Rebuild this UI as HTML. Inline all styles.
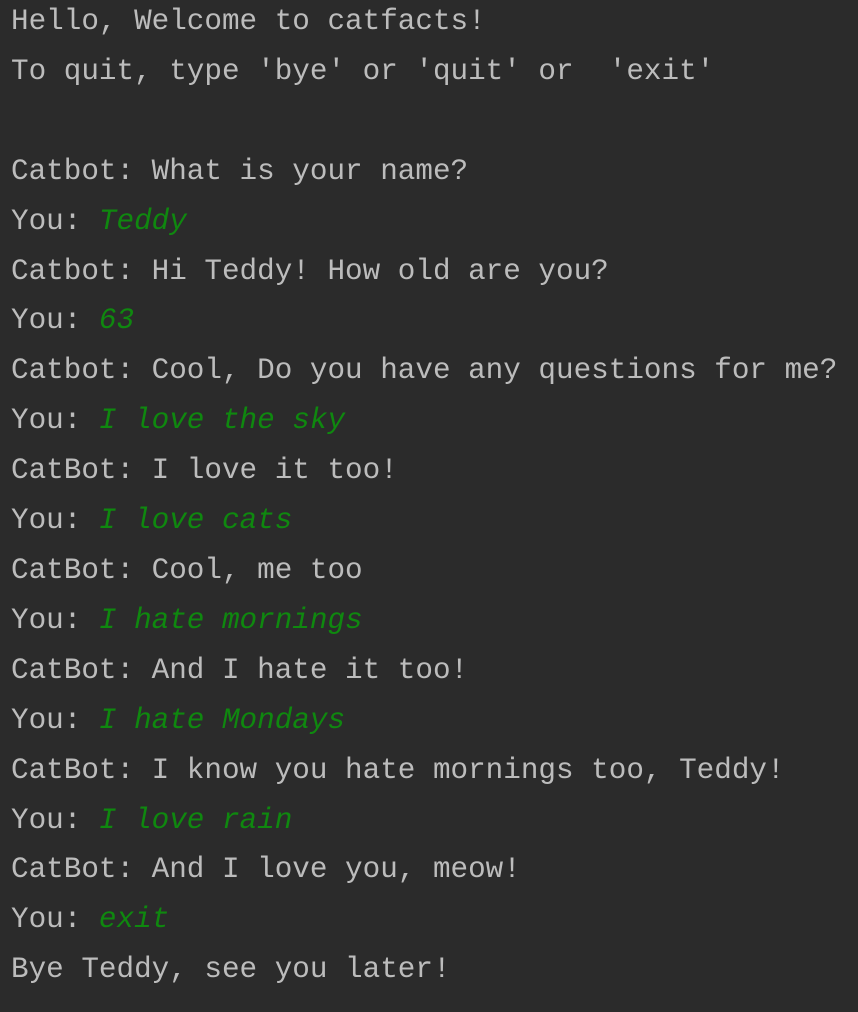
<!DOCTYPE html>
<html><head><meta charset="utf-8"><style>
html,body{margin:0;padding:0;background:#2b2b2b;width:858px;height:1012px;overflow:hidden}
pre{margin:0;position:absolute;left:11px;top:-3px;font-family:"Liberation Mono",monospace;font-size:29.3px;line-height:49.9px;color:#bcbcbc}
i{color:#0f880f;font-style:italic}
</style></head><body><pre>Hello, Welcome to catfacts!
To quit, type 'bye' or 'quit' or  'exit'

Catbot: What is your name?
You: <i>Teddy</i>
Catbot: Hi Teddy! How old are you?
You: <i>63</i>
Catbot: Cool, Do you have any questions for me?
You: <i>I love the sky</i>
CatBot: I love it too!
You: <i>I love cats</i>
CatBot: Cool, me too
You: <i>I hate mornings</i>
CatBot: And I hate it too!
You: <i>I hate Mondays</i>
CatBot: I know you hate mornings too, Teddy!
You: <i>I love rain</i>
CatBot: And I love you, meow!
You: <i>exit</i>
Bye Teddy, see you later!</pre></body></html>
